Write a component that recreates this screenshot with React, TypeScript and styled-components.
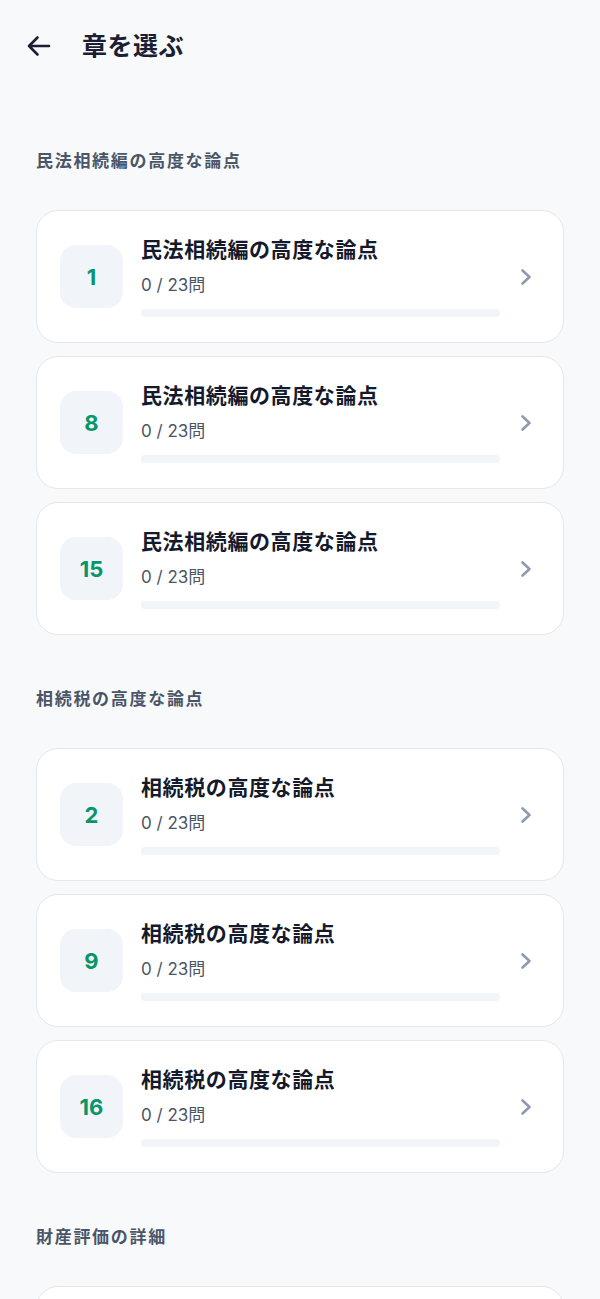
import React from "react";
import styled, { createGlobalStyle } from "styled-components";

const GlobalStyle = createGlobalStyle`
  html, body {
    margin: 0;
    padding: 0;
    background: #f8f9fa;
  }
  body {
    font-family: Inter, "Noto Sans CJK JP", sans-serif;
    -webkit-font-smoothing: antialiased;
  }
  * { box-sizing: border-box; }
`;

const Page = styled.div`
  width: 600px;
  min-height: 1299px;
  background: #f8f9fa;
`;

const Header = styled.header`
  height: 92px;
  display: flex;
  align-items: center;
  gap: 30px;
  padding: 0 0 0 25px;
`;

const BackButton = styled.button`
  display: flex;
  align-items: center;
  justify-content: center;
  width: 27px;
  height: 27px;
  padding: 0;
  border: none;
  background: transparent;
  color: #1a1f33;
  cursor: pointer;
`;

const Title = styled.h1`
  margin: 0;
  font-size: 25px;
  line-height: 34px;
  font-weight: 700;
  color: #1a1f33;
  letter-spacing: 0.5px;
`;

const Content = styled.main`
  display: flex;
  flex-direction: column;
  gap: 52px;
  padding: 57px 36px 40px;
`;

const Section = styled.section`
  display: flex;
  flex-direction: column;
`;

const SectionTitle = styled.h2`
  margin: 0 0 37px;
  font-size: 17px;
  line-height: 24px;
  font-weight: 700;
  color: #4a5568;
  letter-spacing: 1.7px;
`;

const CardList = styled.div`
  display: flex;
  flex-direction: column;
  gap: 13px;
`;

const Card = styled.div`
  height: 133px;
  display: flex;
  align-items: center;
  padding: 0 31px 0 23px;
  background: #ffffff;
  border: 1px solid #e5e7eb;
  border-radius: 22px;
  cursor: pointer;
`;

const Badge = styled.div`
  flex: 0 0 63px;
  width: 63px;
  height: 63px;
  display: flex;
  align-items: center;
  justify-content: center;
  border-radius: 16px;
  background: #f1f4f8;
  color: #079669;
  font-size: 22px;
  font-weight: 700;
  font-family: Inter, sans-serif;
`;

const Body = styled.div`
  flex: 1;
  display: flex;
  flex-direction: column;
  margin: 0 20px 0 18px;
`;

const CardTitle = styled.div`
  font-size: 21px;
  line-height: 28px;
  font-weight: 700;
  color: #141a2b;
  letter-spacing: 0.6px;
`;

const Count = styled.div`
  margin-top: 9px;
  font-size: 17px;
  line-height: 24px;
  color: #4b5563;
`;

const Track = styled.div`
  margin-top: 12px;
  height: 8px;
  border-radius: 4px;
  background: #f1f4f8;
  overflow: hidden;
`;

const Fill = styled.div`
  height: 100%;
  background: #079669;
  border-radius: 4px;
`;

const Chevron = styled.svg`
  flex: 0 0 12px;
  width: 12px;
  height: 18px;
  color: #8f9aae;
`;

type Chapter = { num: number; title: string; done: number; total: number };
type Group = { title: string; chapters: Chapter[] };

const groups: Group[] = [
  {
    title: "民法相続編の高度な論点",
    chapters: [1, 8, 15].map((n) => ({ num: n, title: "民法相続編の高度な論点", done: 0, total: 23 })),
  },
  {
    title: "相続税の高度な論点",
    chapters: [2, 9, 16].map((n) => ({ num: n, title: "相続税の高度な論点", done: 0, total: 23 })),
  },
  {
    title: "財産評価の詳細",
    chapters: [3].map((n) => ({ num: n, title: "財産評価の詳細", done: 0, total: 23 })),
  },
];

function ChapterCard({ c }: { c: Chapter }) {
  return (
    <Card>
      <Badge>{c.num}</Badge>
      <Body>
        <CardTitle>{c.title}</CardTitle>
        <Count>
          {c.done} / {c.total}問
        </Count>
        <Track>
          <Fill style={{ width: `${(c.done / c.total) * 100}%` }} />
        </Track>
      </Body>
      <Chevron viewBox="0 0 12 18" fill="none">
        <path d="M2.5 2.5 L9.5 9 L2.5 15.5" stroke="currentColor" strokeWidth="2.6" strokeLinecap="round" strokeLinejoin="round" />
      </Chevron>
    </Card>
  );
}

export default function App() {
  return (
    <Page>
      <GlobalStyle />
      <Header>
        <BackButton aria-label="戻る">
          <svg width="25" height="22" viewBox="0 0 25 22" fill="none">
            <path d="M23 11 H3 M11.5 2.5 L3 11 L11.5 19.5" stroke="currentColor" strokeWidth="2.6" strokeLinecap="round" strokeLinejoin="round" />
          </svg>
        </BackButton>
        <Title>章を選ぶ</Title>
      </Header>
      <Content>
        {groups.map((g) => (
          <Section key={g.title}>
            <SectionTitle>{g.title}</SectionTitle>
            <CardList>
              {g.chapters.map((c) => (
                <ChapterCard key={c.num} c={c} />
              ))}
            </CardList>
          </Section>
        ))}
      </Content>
    </Page>
  );
}
